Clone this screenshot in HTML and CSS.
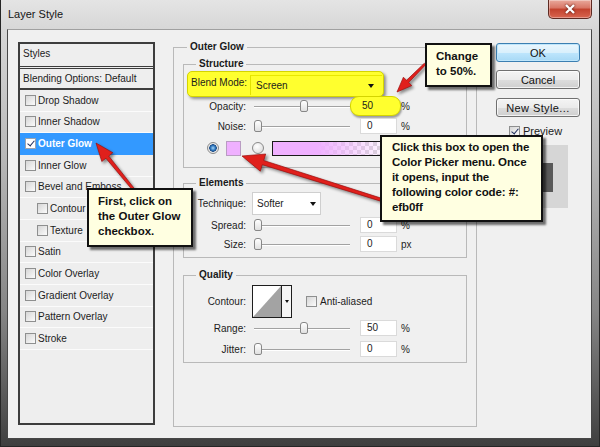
FILE: index.html
```html
<!DOCTYPE html>
<html lang="en">
<head>
<meta charset="utf-8">
<title>Layer Style</title>
<link rel="stylesheet" href="styles.css">
</head>
<body>
<div class="window">
  <header class="titlebar">
    <span class="title">Layer Style</span>
    <span class="close"><svg width="12" height="10" viewBox="0 0 12 10"><path d="M2 1 L10 9 M10 1 L2 9"/></svg></span>
  </header>
  <main class="content">
    <section class="styles-panel">
      <div class="sp-head">Styles</div>
      <div class="sp-blend">Blending Options: Default</div>
      <ul class="sp-list">
        <li><i class="cb"></i>Drop Shadow</li>
        <li><i class="cb"></i>Inner Shadow</li>
        <li class="sel"><i class="cb on"></i>Outer Glow</li>
        <li><i class="cb"></i>Inner Glow</li>
        <li><i class="cb"></i>Bevel and Emboss</li>
        <li class="sub"><i class="cb"></i>Contour</li>
        <li class="sub"><i class="cb"></i>Texture</li>
        <li><i class="cb"></i>Satin</li>
        <li><i class="cb"></i>Color Overlay</li>
        <li><i class="cb"></i>Gradient Overlay</li>
        <li><i class="cb"></i>Pattern Overlay</li>
        <li><i class="cb"></i>Stroke</li>
      </ul>
    </section>

    <fieldset class="grp outer">
      <legend>Outer Glow</legend>

      <fieldset class="grp inner structure">
        <legend>Structure</legend>
        <div class="blend-hl">
          <span class="bl-label">Blend Mode:</span>
          <span class="select bl-select">Screen<i class="dd"></i></span>
        </div>
        <div class="row opacity-row">
          <span class="lbl">Opacity:</span>
          <span class="slider" style="--v:.52"><i class="thumb"></i></span>
          <span class="num num-hl">50</span>
          <span class="unit unit-hl">%</span>
        </div>
        <div class="row noise-row">
          <span class="lbl">Noise:</span>
          <span class="slider" style="--v:0"><i class="thumb"></i></span>
          <span class="num">0</span>
          <span class="unit">%</span>
        </div>
        <div class="row color-row">
          <i class="radio on"></i>
          <span class="swatch"></span>
          <i class="radio"></i>
          <span class="gradbar"></span>
        </div>
      </fieldset>

      <fieldset class="grp inner elements">
        <legend>Elements</legend>
        <div class="row tech-row">
          <span class="lbl">Technique:</span>
          <span class="select tech-select">Softer<i class="dd"></i></span>
        </div>
        <div class="row spread-row">
          <span class="lbl">Spread:</span>
          <span class="slider" style="--v:0"><i class="thumb"></i></span>
          <span class="num">0</span>
          <span class="unit">%</span>
        </div>
        <div class="row size-row">
          <span class="lbl">Size:</span>
          <span class="slider" style="--v:0"><i class="thumb"></i></span>
          <span class="num">0</span>
          <span class="unit">px</span>
        </div>
      </fieldset>

      <fieldset class="grp inner quality">
        <legend>Quality</legend>
        <div class="row contour-row">
          <span class="lbl">Contour:</span>
          <span class="contour">
            <span class="ct-prev"><svg width="28" height="31" viewBox="0 0 28 31"><rect width="28" height="31" fill="#fff"/><polygon points="0,31 28,0 28,31" fill="#a3a3a3"/></svg></span>
            <span class="ct-btn"><i class="dd"></i></span>
          </span>
          <i class="cb aa-cb"></i>
          <span class="aa-label">Anti-aliased</span>
        </div>
        <div class="row range-row">
          <span class="lbl">Range:</span>
          <span class="slider" style="--v:.52"><i class="thumb"></i></span>
          <span class="num">50</span>
          <span class="unit">%</span>
        </div>
        <div class="row jitter-row">
          <span class="lbl">Jitter:</span>
          <span class="slider" style="--v:0"><i class="thumb"></i></span>
          <span class="num">0</span>
          <span class="unit">%</span>
        </div>
      </fieldset>
    </fieldset>

    <aside class="side">
      <span class="btn btn-default">OK</span>
      <span class="btn btn-cancel">Cancel</span>
      <span class="btn btn-new">New Style...</span>
      <div class="preview-row"><i class="cb on"></i><span class="pv-label">Preview</span></div>
      <div class="pv"><div class="pv-in"></div></div>
    </aside>
  </main>
</div>

<svg class="arrows" width="600" height="447" viewBox="0 0 600 447">
  <polygon points="96,143 112.8,152.7 108.7,156 134.9,189.2 133.1,190.8 105.9,158.2 101.8,161.5"/>
  <polygon points="242,156 265.7,154 263.7,160.5 382.5,198.6 381.5,201.4 262.3,164.7 260.3,171.2"/>
  <polygon points="397,92 411.8,85.6 408.7,82.5 425.7,64.7 424.3,63.3 406.5,80.3 403.4,77.2"/>
</svg>

<div class="callout c-change">Change<br>to 50%.</div>
<div class="callout c-click">Click this box to open the<br>Color Picker menu. Once<br>it opens, input the<br>following color code: #:<br>efb0ff</div>
<div class="callout c-first">First, click on<br>the Outer Glow<br>checkbox.</div>
</body>
</html>
```

FILE: styles.css
```css
* { box-sizing: border-box; }
html, body { margin: 0; padding: 0; }
body {
  position: relative;
  width: 600px;
  height: 447px;
  overflow: hidden;
  font-family: "Liberation Sans", Arial, sans-serif;
  font-size: 10px;
  color: #1c1c1c;
  background: #6d6d6d;
}

/* window frame */
.window {
  width: 600px;
  height: 447px;
  display: flex;
  flex-direction: column;
  padding: 0 7px 7px 6px;
  border: 1px solid #262626;
  border-top: 0;
  background: linear-gradient(to bottom, #e4e4e4 0, #d6d6d6 7%, #b8b8b8 35%, #858585 70%, #3f3f3f 100%);
}
.titlebar {
  height: 29px;
  flex: none;
  display: flex;
  align-items: flex-start;
  justify-content: space-between;
}
.title {
  font-size: 11px;
  line-height: 13px;
  margin: 8px 0 0 1px;
  color: #151515;
}
.close {
  width: 44px;
  height: 19px;
  display: flex;
  align-items: center;
  justify-content: center;
  border: 1px solid #5e2a22;
  border-top: 0;
  border-radius: 0 0 5px 5px;
  background: linear-gradient(#e9a99c 0, #d87464 45%, #c2412d 50%, #d8654f 100%);
  box-shadow: inset 0 0 0 1px rgba(255,255,255,.35);
}
.close svg path {
  stroke: #fff;
  stroke-width: 2.3;
  fill: none;
}
.close svg { filter: drop-shadow(0 0 1px #4a0a00); }

.content {
  flex: 1;
  display: flex;
  align-items: flex-start;
  background: #f0f0f0;
  border: 1px solid #474747;
  border-top-color: #a0a0a0;
}

/* styles list */
.styles-panel {
  flex: none;
  margin: 12px 0 0 10px;
  width: 137px;
  height: 383px;
  border: 2px solid #3d3d3d;
  background: #eeeeee;
}
.sp-head {
  height: 25px;
  padding: 4px 0 0 3px;
  line-height: 12px;
  border-bottom: 3px double #3d3d3d;
}
.sp-blend {
  height: 21px;
  padding: 4px 0 0 3px;
  line-height: 12px;
  border-bottom: 2px solid #3d3d3d;
  white-space: nowrap;
}
.sp-list {
  list-style: none;
  margin: 0;
  padding: 0;
}
.sp-list li {
  height: 21.67px;
  display: flex;
  align-items: center;
  padding-left: 5px;
  border-bottom: 1px solid #fbfbfb;
  white-space: nowrap;
}
.sp-list li .cb { margin-right: 2px; }
.sp-list li.sub { padding-left: 17px; }
.sp-list li.sel {
  background: #3399ff;
  color: #fff;
  font-weight: bold;
  border-bottom-color: #3399ff;
}
.sp-list li.sel .cb { background: #fff; border-color: #9aa4b0; }

.cb {
  display: inline-block;
  position: relative;
  flex: none;
  width: 11px;
  height: 11px;
  border: 1px solid #8e8f8f;
  background: linear-gradient(135deg, #d6d6d6, #fbfbfb);
}
.cb.on::after {
  content: "";
  position: absolute;
  left: 3px;
  top: 0;
  width: 3px;
  height: 6px;
  border: solid #1f2f5c;
  border-width: 0 1.5px 1.5px 0;
  transform: rotate(40deg);
}

/* group boxes */
fieldset { margin: 0; padding: 0; min-width: 0; }
.grp { border: 1px solid #b9b9b9; }
.grp > legend {
  font-weight: bold;
  font-size: 10px;
  line-height: 12px;
  padding: 0 3px;
  color: #1a1a1a;
}
.outer {
  flex: none;
  margin: 11px 0 0 18px;
  width: 304px;
  height: 386px;
  padding: 0 9px;
}
.outer > legend { margin-left: 4px; }
.inner { width: 284px; }
.inner > legend { margin-left: 12px; }
.structure { margin-top: 5px; padding-bottom: 10px; }
.elements { margin-top: 9px; padding-bottom: 4px; }
.quality { margin-top: 11px; padding-bottom: 4px; }

.row {
  display: flex;
  align-items: center;
  height: 18px;
  white-space: nowrap;
}
.lbl {
  flex: none;
  width: 62px;
  text-align: right;
}
.slider {
  position: relative;
  flex: none;
  width: 96px;
  height: 12px;
  margin-left: 8px;
}
.slider::before {
  content: "";
  position: absolute;
  left: 0;
  right: 0;
  top: 6px;
  height: 1px;
  background: #a2a2a2;
  box-shadow: 0 1px 0 #fff;
}
.thumb {
  position: absolute;
  top: 0;
  left: calc((100% - 8px) * var(--v));
  width: 8px;
  height: 12px;
  border: 1px solid #878787;
  border-radius: 3px 3px 2px 2px;
  background: linear-gradient(#ffffff, #e0e0e0);
}
.num {
  flex: none;
  width: 37px;
  height: 16px;
  margin-left: 10px;
  padding-left: 6px;
  line-height: 14px;
  background: #fff;
  border: 1px solid #dadada;
}
.unit { margin-left: 4px; }

/* annotation highlights */
.blend-hl {
  display: flex;
  align-items: center;
  margin: 1px 0 0 3px;
  width: 197px;
  height: 26px;
  background: #ffff2e;
  border: 1px solid #d4d400;
  border-radius: 5px;
  box-shadow: 2px 2px 3px rgba(0,0,0,.4);
  white-space: nowrap;
}
.bl-label {
  flex: none;
  width: 58px;
  padding-left: 3px;
  margin-top: -3px;
  white-space: nowrap;
}
.select {
  display: flex;
  align-items: center;
  flex: none;
}
.bl-select {
  align-self: flex-end;
  margin-left: 4px;
  margin-bottom: 1px;
  width: 132px;
  height: 20px;
  padding-left: 5px;
  border-left: 1px solid #e2e200;
  border-top: 1px solid #e8e800;
}
.dd {
  display: inline-block;
  width: 0;
  height: 0;
  border-left: 3.5px solid transparent;
  border-right: 3.5px solid transparent;
  border-top: 4px solid #111;
}
.select .dd { margin-left: auto; margin-right: 8px; }
.num-hl {
  margin-left: 0;
  width: 51px;
  height: 20px;
  padding-left: 11px;
  line-height: 18px;
  background: #ffff2e;
  border: 1px solid #d4d400;
  border-radius: 9px;
  box-shadow: 1px 2px 2px rgba(0,0,0,.35);
}
.unit-hl { margin-left: 0; }
.noise-row { margin-top: 2px; }

.color-row { margin-top: 4px; }
.radio {
  flex: none;
  display: inline-block;
  width: 12px;
  height: 12px;
  border-radius: 50%;
  border: 1px solid #8a8a8a;
  background: radial-gradient(circle at 40% 35%, #ffffff, #d6d6d6);
}
.radio.on {
  background: radial-gradient(circle, #a6d8fa 0, #2b72b9 2.5px, #1c4c86 3.5px, #e4e4e4 4px, #fafafa 100%);
}
.color-row .radio:first-child { margin-left: 23px; }
.swatch {
  flex: none;
  width: 15px;
  height: 15px;
  margin-left: 7px;
  background: #efb0ff;
  border: 1px solid #b99cc2;
}
.color-row .radio + .gradbar { margin-left: 8px; }
.color-row .swatch + .radio { margin-left: 11px; }
.gradbar {
  flex: none;
  width: 128px;
  height: 15px;
  border: 1px solid #1a1a1a;
  background:
    linear-gradient(to right, #efb0ff 0, #efb0ff 35%, rgba(239,176,255,0) 95%),
    repeating-conic-gradient(#d6d6d6 0 25%, #ffffff 0 50%) 0 0 / 8px 8px;
}

.tech-row { margin-top: 3px; height: 23px; }
.tech-select {
  margin-left: 6px;
  width: 69px;
  height: 23px;
  padding-left: 4px;
  background: #fff;
  border: 1px solid #cfcfcf;
}
.tech-select .dd { margin-right: 4px; }
.spread-row { margin-top: 1px; }
.size-row { margin-top: 1px; }

.contour-row { margin-top: 4px; height: 33px; }
.contour {
  display: flex;
  flex: none;
  margin-left: 6px;
  width: 40px;
  height: 33px;
  border: 1px solid #1e1e1e;
}
.ct-prev { display: block; width: 28px; height: 31px; }
.ct-prev svg { display: block; }
.ct-btn {
  flex: 1;
  display: flex;
  align-items: center;
  justify-content: center;
  border-left: 1px solid #1e1e1e;
  background: #f6f6f6;
}
.ct-btn .dd { border-left-width: 2.5px; border-right-width: 2.5px; border-top-width: 3px; }
.aa-cb { margin-left: 14px; }
.aa-label { margin-left: 3px; }
.range-row { margin-top: 1px; }
.jitter-row { margin-top: 3px; }

/* right column */
.side {
  flex: none;
  margin: 13px 0 0 19px;
  width: 84px;
  display: flex;
  flex-direction: column;
}
.btn {
  display: flex;
  align-items: center;
  justify-content: center;
  height: 19px;
  font-size: 11px;
  color: #111;
  border: 1px solid #707070;
  border-radius: 3px;
  background: linear-gradient(#f4f4f4 0, #ebebeb 50%, #dddddd 51%, #cfcfcf 100%);
  box-shadow: inset 0 0 0 1px rgba(255,255,255,.75);
  white-space: nowrap;
}
.btn-default {
  border-color: #3c7fb1;
  background: linear-gradient(#eaf6fd 0, #d9f0fc 50%, #bee6fd 51%, #a7d9f5 100%);
  box-shadow: inset 0 0 0 1px #bfe6fb;
}
.btn-cancel { margin-top: 8px; }
.btn-new { margin-top: 9px; letter-spacing: 0.4px; }
.preview-row {
  display: flex;
  align-items: center;
  height: 12px;
  margin-top: 8px;
  padding-left: 13px;
  font-size: 11px;
}
.pv-label { margin-left: 3px; }
.pv {
  margin: 8px 0 0 12px;
  width: 60px;
  height: 63px;
  background: #d6d6d6;
  overflow: hidden;
}
.pv-in {
  margin: 18px 0 0 15px;
  width: 30px;
  height: 29px;
  background: #595959;
}

/* annotations */
.arrows {
  position: absolute;
  left: 0;
  top: 0;
  pointer-events: none;
}
.arrows polygon {
  fill: #e0201c;
  stroke: #9b0f0f;
  stroke-width: 0.7;
  stroke-linejoin: round;
  filter: drop-shadow(2px 2px 1.5px rgba(0,0,0,.45));
}
.callout {
  position: absolute;
  background: #ffffe1;
  border: 2px solid #111;
  box-shadow: 3px 3px 2px rgba(0,0,0,.55);
  font-weight: bold;
  font-size: 11.5px;
  line-height: 15px;
  color: #111;
  white-space: nowrap;
}
.c-change { left: 425px; top: 43px; width: 67px; height: 44px; padding: 4px 0 0 9px; }
.c-click { left: 380px; top: 135px; width: 163px; height: 87px; padding: 3px 0 0 10px; letter-spacing: -0.1px; }
.c-first { left: 87px; top: 188px; width: 106px; height: 59px; padding: 4px 0 0 9px; }
```
